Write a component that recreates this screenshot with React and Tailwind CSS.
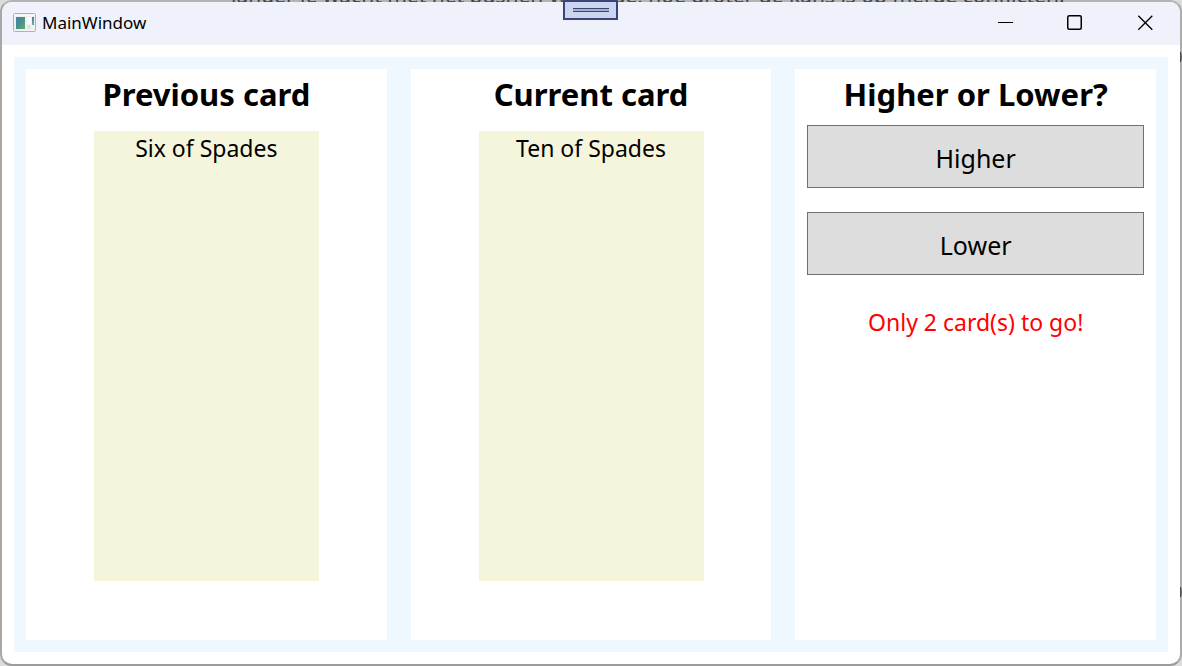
import React from "react";

function AppIcon() {
  return (
    <svg width="23" height="19" viewBox="0 0 23 19" aria-hidden="true">
      <defs>
        <linearGradient id="pane" x1="0" y1="0" x2="1" y2="1">
          <stop offset="0" stopColor="#4a7fae" />
          <stop offset="0.5" stopColor="#479088" />
          <stop offset="1" stopColor="#62b070" />
        </linearGradient>
        <linearGradient id="side" x1="0" y1="0" x2="0" y2="1">
          <stop offset="0" stopColor="#4a78b8" />
          <stop offset="1" stopColor="#69b08a" />
        </linearGradient>
      </defs>
      <rect x="0.5" y="0.5" width="22" height="18" rx="1" fill="#eff0f2" stroke="#aeb2bb" />
      <rect x="2" y="2" width="19" height="1" fill="#fafafa" />
      <rect x="3" y="4" width="9" height="12" fill="url(#pane)" />
      <rect x="14" y="4" width="4" height="7" fill="#fafafa" />
      <rect x="14" y="12" width="4" height="4" fill="#e2e3e3" />
      <rect x="19" y="4" width="2" height="8" fill="url(#side)" />
    </svg>
  );
}

function TitleButton({ label, children }) {
  return (
    <button type="button" aria-label={label} className="flex h-full w-[70px] items-center justify-center">
      <svg width="16" height="16" viewBox="0 0 16 16" fill="none" stroke="#000" strokeWidth="1.5" aria-hidden="true">
        {children}
      </svg>
    </button>
  );
}

function TitleBar() {
  return (
    <header className="flex h-[43px] shrink-0 items-center justify-between bg-[#eff2fa] pb-[2px] pl-[11px]">
      <div className="flex items-center gap-[6px]">
        <AppIcon />
        <span className="text-[17px] leading-6">MainWindow</span>
      </div>
      <div className="flex h-full">
        <TitleButton label="Minimize">
          <path d="M1 7.5h15" strokeWidth="1" />
        </TitleButton>
        <TitleButton label="Maximize">
          <rect x="0.75" y="0.75" width="13.5" height="13.5" rx="1.5" />
        </TitleButton>
        <TitleButton label="Close">
          <path d="M1.3 0.8l14 14M15.3 0.8L1.3 14.8" strokeWidth="1.3" />
        </TitleButton>
      </div>
    </header>
  );
}

function Column({ title, children }) {
  return (
    <section className="flex min-w-0 flex-1 flex-col items-center bg-white px-3">
      <h2 className="pt-1 text-[31px] leading-[42px] font-bold whitespace-nowrap">{title}</h2>
      {children}
    </section>
  );
}

function Card({ name }) {
  return (
    <div className="mt-4 h-[450px] w-[225px] bg-[#f5f5dc] pt-px text-center text-[23px] leading-8">{name}</div>
  );
}

function GuessButton({ children }) {
  return (
    <button
      type="button"
      className="h-[63px] w-full border border-[#707070] bg-[#dddddd] pt-[2px] text-[25px] leading-9"
    >
      {children}
    </button>
  );
}

export default function App() {
  return (
    <div className="relative flex min-h-screen flex-col overflow-hidden bg-[#dcdcdc] font-['Noto_Sans','Open_Sans',sans-serif] text-black">
      <div className="flex grow flex-col overflow-hidden rounded-[12px] border-2 border-t-[#b4b4b4] border-r-[#acacac] border-b-[#9c9c9c] border-l-[#a8a8a8] bg-white">
        <TitleBar />
        <main className="m-3 flex grow gap-6 bg-[#eff7ff] p-3">
          <Column title="Previous card">
            <Card name="Six of Spades" />
          </Column>
          <Column title="Current card">
            <Card name="Ten of Spades" />
          </Column>
          <Column title="Higher or Lower?">
            <div className="mt-[10px] flex w-full flex-col gap-6">
              <GuessButton>Higher</GuessButton>
              <GuessButton>Lower</GuessButton>
            </div>
            <p className="mt-[31px] text-[23px] leading-8 text-[#ff0000]">Only 2 card(s) to go!</p>
          </Column>
        </main>
      </div>

      <div
        aria-hidden="true"
        className="absolute inset-x-0 top-0 flex h-[2px] items-end overflow-hidden pl-[231px] text-[21px] leading-[14px] whitespace-nowrap text-[#444444]"
      >
        langer je wacht met het pushen van code, hoe groter de kans is op merge conflicten!
      </div>
      <svg aria-hidden="true" className="absolute top-[51px] right-0" width="2" height="12" viewBox="0 0 2 12">
        <path d="M0 1Q2 6 0 11" fill="none" stroke="#444444" strokeWidth="1.5" />
      </svg>
      <svg aria-hidden="true" className="absolute top-[586px] right-0" width="2" height="12" viewBox="0 0 2 12">
        <path d="M0 1Q2 6 0 11" fill="none" stroke="#444444" strokeWidth="1.5" />
      </svg>
      <div className="absolute top-0 left-1/2 flex h-5 w-[55px] -translate-x-7 flex-col items-center justify-center border-2 border-[#3b4575] bg-[#ccd5f0]">
        <div className="h-1 w-9 border-y border-[#3b4575] bg-[#a5afd5]" />
      </div>
    </div>
  );
}
